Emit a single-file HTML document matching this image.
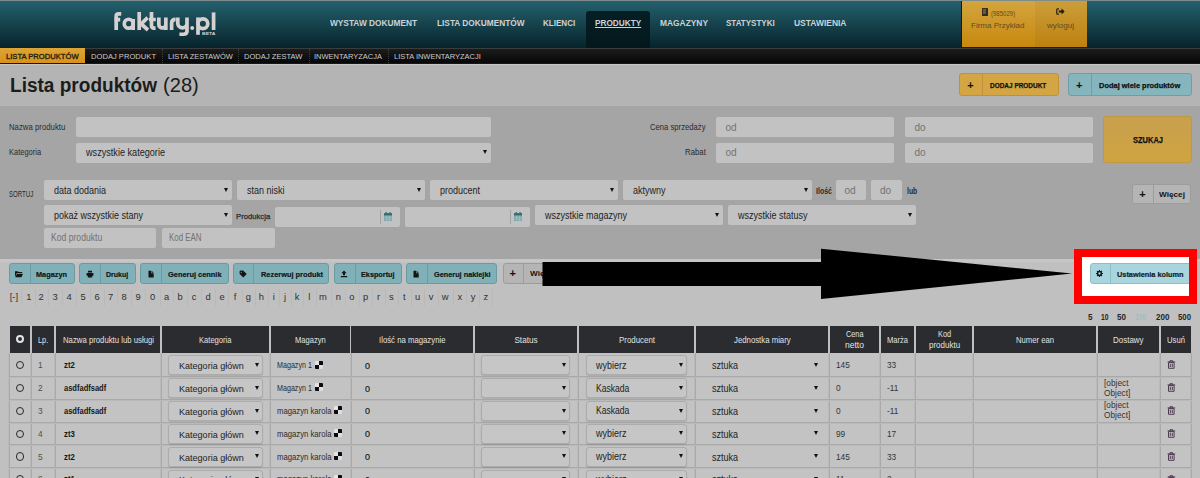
<!DOCTYPE html>
<html><head><meta charset="utf-8"><style>
*{margin:0;padding:0;box-sizing:border-box}
html,body{width:1200px;height:478px;overflow:hidden;background:#c0c0c0;font-family:"Liberation Sans",sans-serif}
body{position:relative}
.a{position:absolute}
.t{position:absolute;white-space:nowrap;transform-origin:0 0}
</style></head><body>
<div class="a" style="left:0px;top:0px;width:1200px;height:1px;background:#7f8c8e"></div>
<div class="a" style="left:0px;top:1px;width:1200px;height:47px;background:linear-gradient(#24616d,#07232b)"></div>
<svg class="a" style="left:0;top:0" width="230" height="48"><g fill="none" stroke="#d5d1d1" stroke-width="3.7"><path d="M116.2 30V16.2Q116.2 13.85 118.6 13.85H121.2M114.2 19.6H120.2"/><circle cx="128.7" cy="23.7" r="4.45"/><path d="M133.15 19V30"/><path d="M139.2 12V30M147.6 17.6L141.2 23.9L148 30"/><path d="M151.5 12V25.6Q151.5 28.2 154 28.2H155.6M149 19.5H155.8"/><path d="M158.85 17.4V24.4A3.5 3.5 0 0 0 165.85 24.4M165.85 17.4V30"/><path d="M171.6 30V23.3Q171.6 19.3 175.6 19.3"/><path d="M177.8 17.4V23.2A4.6 4.6 0 0 0 187 23.2M187 17.4V31Q187 34.25 183.6 34.25H179.4"/><path d="M198 17.4V34.8"/><circle cx="202.9" cy="23.7" r="4.9"/><path d="M213.6 12.4V30"/></g><circle cx="192.2" cy="28" r="2" fill="#d5d1d1"/></svg>
<div class="a" style="left:585.7px;top:11px;width:64.3px;height:36.5px;background:linear-gradient(#051f25,#03181d);border-radius:3px 3px 0 0"></div>
<div class="a" style="left:961px;top:1px;width:74px;height:46px;background:linear-gradient(#d3a53f,#c7880d);border-left:1px solid #1a1a10"></div>
<div class="a" style="left:1035px;top:1px;width:52px;height:46px;background:linear-gradient(#cb9e3b,#be810e)"></div>
<div class="a" style="left:0px;top:48px;width:1200px;height:16px;background:linear-gradient(#1d1d1d,#050505)"></div>
<div class="a" style="left:0px;top:47.6px;width:1200px;height:1px;background:#3a3d3e"></div>
<div class="a" style="left:0px;top:48px;width:85px;height:15px;background:linear-gradient(#dca436,#d8921a)"></div>
<div class="a" style="left:0px;top:63px;width:1200px;height:1px;background:#1a1712"></div>
<div class="a" style="left:161.5px;top:49px;width:1px;height:14px;border-left:1px dotted #3e3e3e"></div>
<div class="a" style="left:238.4px;top:49px;width:1px;height:14px;border-left:1px dotted #3e3e3e"></div>
<div class="a" style="left:309.3px;top:49px;width:1px;height:14px;border-left:1px dotted #3e3e3e"></div>
<div class="a" style="left:388px;top:49px;width:1px;height:14px;border-left:1px dotted #3e3e3e"></div>
<div class="a" style="left:0px;top:64px;width:1200px;height:42px;background:#b4b4b4"></div>
<div class="a" style="left:0px;top:64px;width:1200px;height:1px;background:#c6c6c6"></div>
<div class="a" style="left:959.4px;top:72.7px;width:99.4px;height:23.5px;background:#d3a543;border:1px solid #bf923a;border-radius:3px"></div>
<div class="a" style="left:982.3px;top:73.7px;width:1px;height:21.5px;background:#bf923a"></div>
<div class="a" style="left:1068px;top:72.7px;width:123.7px;height:23.5px;background:#85b5bd;border:1px solid #6f9ea6;border-radius:3px"></div>
<div class="a" style="left:1091.2px;top:73.7px;width:1px;height:21.5px;background:#6f9ea6"></div>
<div class="a" style="left:0px;top:106px;width:1200px;height:153px;background:#a5a5a5"></div>
<div class="a" style="left:76px;top:117px;width:415px;height:20px;background:#c2c2c2;border-radius:2px"></div>
<div class="a" style="left:76px;top:142.5px;width:415px;height:20px;background:#c2c2c2;border-radius:2px"></div>
<div class="a" style="left:482.90px;top:150.00px;width:0;height:0;border-left:2.30px solid transparent;border-right:2.30px solid transparent;border-top:4.20px solid #111"></div>
<div class="a" style="left:715.5px;top:117px;width:178px;height:20px;background:#c2c2c2;border-radius:2px"></div>
<div class="a" style="left:904.5px;top:117px;width:188px;height:20px;background:#c2c2c2;border-radius:2px"></div>
<div class="a" style="left:715.5px;top:142.5px;width:178px;height:20px;background:#c2c2c2;border-radius:2px"></div>
<div class="a" style="left:904.5px;top:142.5px;width:188px;height:20px;background:#c2c2c2;border-radius:2px"></div>
<div class="a" style="left:1102.7px;top:116px;width:89.5px;height:46.5px;background:linear-gradient(#c8a04e,#cfa440);border-radius:3px;border:1px solid #bf9840"></div>
<div class="a" style="left:43.8px;top:180px;width:188px;height:20px;background:#c2c2c2;border-radius:2px"></div>
<div class="a" style="left:223.70px;top:187.50px;width:0;height:0;border-left:2.30px solid transparent;border-right:2.30px solid transparent;border-top:4.20px solid #111"></div>
<div class="a" style="left:237px;top:180px;width:188px;height:20px;background:#c2c2c2;border-radius:2px"></div>
<div class="a" style="left:416.90px;top:187.50px;width:0;height:0;border-left:2.30px solid transparent;border-right:2.30px solid transparent;border-top:4.20px solid #111"></div>
<div class="a" style="left:430px;top:180px;width:188.3px;height:20px;background:#c2c2c2;border-radius:2px"></div>
<div class="a" style="left:610.20px;top:187.50px;width:0;height:0;border-left:2.30px solid transparent;border-right:2.30px solid transparent;border-top:4.20px solid #111"></div>
<div class="a" style="left:623.2px;top:180px;width:188.4px;height:20px;background:#c2c2c2;border-radius:2px"></div>
<div class="a" style="left:803.50px;top:187.50px;width:0;height:0;border-left:2.30px solid transparent;border-right:2.30px solid transparent;border-top:4.20px solid #111"></div>
<div class="a" style="left:836px;top:180px;width:30.3px;height:20px;background:#c2c2c2;border-radius:2px"></div>
<div class="a" style="left:871.4px;top:180px;width:30.6px;height:20px;background:#c2c2c2;border-radius:2px"></div>
<div class="a" style="left:1132px;top:183.6px;width:59.3px;height:20.8px;background:#b5b5b5;border:1px solid #9c9c9c;border-radius:3px"></div>
<div class="a" style="left:1152.8px;top:184.6px;width:1px;height:18.8px;background:#9c9c9c"></div>
<div class="a" style="left:43.8px;top:205.4px;width:188px;height:20px;background:#c2c2c2;border-radius:2px"></div>
<div class="a" style="left:223.70px;top:212.90px;width:0;height:0;border-left:2.30px solid transparent;border-right:2.30px solid transparent;border-top:4.20px solid #111"></div>
<div class="a" style="left:275px;top:206.75px;width:124.6px;height:20px;background:#c2c2c2;border-radius:2px"></div>
<div class="a" style="left:404.8px;top:206.75px;width:125px;height:20px;background:#c2c2c2;border-radius:2px"></div>
<div class="a" style="left:535px;top:205.4px;width:187.7px;height:20px;background:#c2c2c2;border-radius:2px"></div>
<div class="a" style="left:714.60px;top:212.90px;width:0;height:0;border-left:2.30px solid transparent;border-right:2.30px solid transparent;border-top:4.20px solid #111"></div>
<div class="a" style="left:728px;top:205.4px;width:188.4px;height:20px;background:#c2c2c2;border-radius:2px"></div>
<div class="a" style="left:908.30px;top:212.90px;width:0;height:0;border-left:2.30px solid transparent;border-right:2.30px solid transparent;border-top:4.20px solid #111"></div>
<div class="a" style="left:43.8px;top:228px;width:112.5px;height:20px;background:#c2c2c2;border-radius:2px"></div>
<div class="a" style="left:162px;top:228px;width:112.5px;height:20px;background:#c2c2c2;border-radius:2px"></div>
<div class="a" style="left:380.3px;top:209.5px;width:1px;height:14px;background:#a2a2a2"></div>
<svg class="a" style="left:383.8px;top:211.5px" width="8.4" height="9.4" viewBox="0 0 8.4 9.4"><rect x="0" y="1.2" width="8.4" height="8.2" rx=".8" fill="#7fa6aa"/><rect x="0" y="1.2" width="8.4" height="2.2" fill="#2f6c71"/><rect x="1.6" y="0" width="1.4" height="2" fill="#4b6f72"/><rect x="5.4" y="0" width="1.4" height="2" fill="#4b6f72"/><path d="M.6 5.2h7.2M.6 7.2h7.2M2.8 3.6v5.4M5.6 3.6v5.4" stroke="#a9c3c5" stroke-width=".7"/></svg>
<div class="a" style="left:510.1px;top:209.5px;width:1px;height:14px;background:#a2a2a2"></div>
<svg class="a" style="left:513.6px;top:211.5px" width="8.4" height="9.4" viewBox="0 0 8.4 9.4"><rect x="0" y="1.2" width="8.4" height="8.2" rx=".8" fill="#7fa6aa"/><rect x="0" y="1.2" width="8.4" height="2.2" fill="#2f6c71"/><rect x="1.6" y="0" width="1.4" height="2" fill="#4b6f72"/><rect x="5.4" y="0" width="1.4" height="2" fill="#4b6f72"/><path d="M.6 5.2h7.2M.6 7.2h7.2M2.8 3.6v5.4M5.6 3.6v5.4" stroke="#a9c3c5" stroke-width=".7"/></svg>
<div class="a" style="left:0px;top:259px;width:1200px;height:3px;background:#c6c6c6"></div>
<div class="a" style="left:9.1px;top:263px;width:65.60000000000001px;height:20.5px;background:#80b1b8;border:1px solid #6a9ba2;border-radius:3px"></div>
<div class="a" style="left:29.5px;top:264px;width:1px;height:18.5px;background:#6a9ba2"></div>
<div class="a" style="left:15.3px;top:269.8px;width:8px;height:8px;line-height:0"><svg width="8" height="8" style="display:block"><path d="M0 1.2h2.8l.8.9h3.6v1.2H1.6L0 7.2z" fill="#151515"/><path d="M1.9 3.9H8L6.4 7.2H.3z" fill="#151515"/></svg></div>
<div class="a" style="left:79.4px;top:263px;width:56.599999999999994px;height:20.5px;background:#80b1b8;border:1px solid #6a9ba2;border-radius:3px"></div>
<div class="a" style="left:99.6px;top:264px;width:1px;height:18.5px;background:#6a9ba2"></div>
<div class="a" style="left:85.5px;top:269.8px;width:8px;height:8px;line-height:0"><svg width="8" height="8" style="display:block"><path d="M2 .8h4v1.8H2zM.6 3h6.8v2.8H6.2V7.4H1.8V5.8H.6z" fill="#151515"/></svg></div>
<div class="a" style="left:140.4px;top:263px;width:88.19999999999999px;height:20.5px;background:#80b1b8;border:1px solid #6a9ba2;border-radius:3px"></div>
<div class="a" style="left:161.4px;top:264px;width:1px;height:18.5px;background:#6a9ba2"></div>
<div class="a" style="left:146.9px;top:269.8px;width:8px;height:8px;line-height:0"><svg width="8" height="8" style="display:block"><path d="M1.5 .7h2.6v2.6h2.6v4.2H1.5z" fill="#151515"/><path d="M4.6 .7l2.1 2.1H4.6z" fill="#151515"/></svg></div>
<div class="a" style="left:232.6px;top:263px;width:96.70000000000002px;height:20.5px;background:#80b1b8;border:1px solid #6a9ba2;border-radius:3px"></div>
<div class="a" style="left:253.4px;top:264px;width:1px;height:18.5px;background:#6a9ba2"></div>
<div class="a" style="left:239.0px;top:269.8px;width:8px;height:8px;line-height:0"><svg width="8" height="8" style="display:block"><path d="M.5 1.5L1.5.5h2.6l3.6 3.6-3.4 3.4L.7 3.9z" fill="#151515"/><circle cx="2.3" cy="2.3" r=".6" fill="#80b1b8"/></svg></div>
<div class="a" style="left:333.9px;top:263px;width:67.70000000000005px;height:20.5px;background:#80b1b8;border:1px solid #6a9ba2;border-radius:3px"></div>
<div class="a" style="left:354.5px;top:264px;width:1px;height:18.5px;background:#6a9ba2"></div>
<div class="a" style="left:340.2px;top:269.8px;width:8px;height:8px;line-height:0"><svg width="8" height="8" style="display:block"><path d="M4 .6L6.7 3.3H5v2H3v-2H1.3zM.8 5.9h6.4v1.3H.8z" fill="#151515"/></svg></div>
<div class="a" style="left:405.9px;top:263px;width:91.30000000000001px;height:20.5px;background:#80b1b8;border:1px solid #6a9ba2;border-radius:3px"></div>
<div class="a" style="left:426.8px;top:264px;width:1px;height:18.5px;background:#6a9ba2"></div>
<div class="a" style="left:412.35px;top:269.8px;width:8px;height:8px;line-height:0"><svg width="8" height="8" style="display:block"><path d="M1.5 .7h2.6v2.6h2.6v4.2H1.5z" fill="#151515"/><path d="M4.6 .7l2.1 2.1H4.6z" fill="#151515"/></svg></div>
<div class="a" style="left:502.6px;top:263px;width:60px;height:20.5px;background:#b5b5b5;border:1px solid #9c9c9c;border-radius:3px"></div>
<div class="a" style="left:522.9px;top:264px;width:1px;height:18.5px;background:#9c9c9c"></div>
<div class="a" style="left:21px;top:289px;width:1px;height:17px;background:#b9b9b9"></div>
<div class="a" style="left:35px;top:289px;width:1px;height:17px;background:#b9b9b9"></div>
<div class="a" style="left:48px;top:289px;width:1px;height:17px;background:#b9b9b9"></div>
<div class="a" style="left:62px;top:289px;width:1px;height:17px;background:#b9b9b9"></div>
<div class="a" style="left:76px;top:289px;width:1px;height:17px;background:#b9b9b9"></div>
<div class="a" style="left:90px;top:289px;width:1px;height:17px;background:#b9b9b9"></div>
<div class="a" style="left:104px;top:289px;width:1px;height:17px;background:#b9b9b9"></div>
<div class="a" style="left:117px;top:289px;width:1px;height:17px;background:#b9b9b9"></div>
<div class="a" style="left:131px;top:289px;width:1px;height:17px;background:#b9b9b9"></div>
<div class="a" style="left:145px;top:289px;width:1px;height:17px;background:#b9b9b9"></div>
<div class="a" style="left:160px;top:289px;width:1px;height:17px;background:#b9b9b9"></div>
<div class="a" style="left:173px;top:289px;width:1px;height:17px;background:#b9b9b9"></div>
<div class="a" style="left:187px;top:289px;width:1px;height:17px;background:#b9b9b9"></div>
<div class="a" style="left:201px;top:289px;width:1px;height:17px;background:#b9b9b9"></div>
<div class="a" style="left:215px;top:289px;width:1px;height:17px;background:#b9b9b9"></div>
<div class="a" style="left:228px;top:289px;width:1px;height:17px;background:#b9b9b9"></div>
<div class="a" style="left:242px;top:289px;width:1px;height:17px;background:#b9b9b9"></div>
<div class="a" style="left:255px;top:289px;width:1px;height:17px;background:#b9b9b9"></div>
<div class="a" style="left:268px;top:289px;width:1px;height:17px;background:#b9b9b9"></div>
<div class="a" style="left:279px;top:289px;width:1px;height:17px;background:#b9b9b9"></div>
<div class="a" style="left:291px;top:289px;width:1px;height:17px;background:#b9b9b9"></div>
<div class="a" style="left:303px;top:289px;width:1px;height:17px;background:#b9b9b9"></div>
<div class="a" style="left:316px;top:289px;width:1px;height:17px;background:#b9b9b9"></div>
<div class="a" style="left:331px;top:289px;width:1px;height:17px;background:#b9b9b9"></div>
<div class="a" style="left:345px;top:289px;width:1px;height:17px;background:#b9b9b9"></div>
<div class="a" style="left:359px;top:289px;width:1px;height:17px;background:#b9b9b9"></div>
<div class="a" style="left:372px;top:289px;width:1px;height:17px;background:#b9b9b9"></div>
<div class="a" style="left:385px;top:289px;width:1px;height:17px;background:#b9b9b9"></div>
<div class="a" style="left:398px;top:289px;width:1px;height:17px;background:#b9b9b9"></div>
<div class="a" style="left:411px;top:289px;width:1px;height:17px;background:#b9b9b9"></div>
<div class="a" style="left:424px;top:289px;width:1px;height:17px;background:#b9b9b9"></div>
<div class="a" style="left:438px;top:289px;width:1px;height:17px;background:#b9b9b9"></div>
<div class="a" style="left:453px;top:289px;width:1px;height:17px;background:#b9b9b9"></div>
<div class="a" style="left:466px;top:289px;width:1px;height:17px;background:#b9b9b9"></div>
<div class="a" style="left:479px;top:289px;width:1px;height:17px;background:#b9b9b9"></div>
<div class="a" style="left:492px;top:289px;width:1px;height:17px;background:#b9b9b9"></div>
<div class="a" style="left:9.5px;top:353px;width:1182px;height:125px;background:#c3c3c3"></div>
<div class="a" style="left:9.6px;top:326px;width:20.200000000000003px;height:27px;background:#2b2c30"></div>
<div class="a" style="left:32.1px;top:326px;width:21.799999999999997px;height:27px;background:#2b2c30"></div>
<div class="a" style="left:56.1px;top:326px;width:103.80000000000001px;height:27px;background:#2b2c30"></div>
<div class="a" style="left:162px;top:326px;width:107.19999999999999px;height:27px;background:#2b2c30"></div>
<div class="a" style="left:271.1px;top:326px;width:78.69999999999999px;height:27px;background:#2b2c30"></div>
<div class="a" style="left:351.4px;top:326px;width:121.60000000000002px;height:27px;background:#2b2c30"></div>
<div class="a" style="left:475.4px;top:326px;width:101.20000000000005px;height:27px;background:#2b2c30"></div>
<div class="a" style="left:579.1px;top:326px;width:114.79999999999995px;height:27px;background:#2b2c30"></div>
<div class="a" style="left:696px;top:326px;width:131.70000000000005px;height:27px;background:#2b2c30"></div>
<div class="a" style="left:829.8px;top:326px;width:49.10000000000002px;height:27px;background:#2b2c30"></div>
<div class="a" style="left:881px;top:326px;width:33px;height:27px;background:#2b2c30"></div>
<div class="a" style="left:916.3px;top:326px;width:55.700000000000045px;height:27px;background:#2b2c30"></div>
<div class="a" style="left:974.1px;top:326px;width:121.60000000000002px;height:27px;background:#2b2c30"></div>
<div class="a" style="left:1097.7px;top:326px;width:61.299999999999955px;height:27px;background:#2b2c30"></div>
<div class="a" style="left:1161px;top:326px;width:30.200000000000045px;height:27px;background:#2b2c30"></div>
<div class="a" style="left:8px;top:353px;width:2px;height:125px;background:linear-gradient(90deg,#bababa 50%,#a9a9a9 50%)"></div>
<div class="a" style="left:30px;top:353px;width:2px;height:125px;background:linear-gradient(90deg,#bababa 50%,#a9a9a9 50%)"></div>
<div class="a" style="left:54px;top:353px;width:2px;height:125px;background:linear-gradient(90deg,#bababa 50%,#a9a9a9 50%)"></div>
<div class="a" style="left:160px;top:353px;width:2px;height:125px;background:linear-gradient(90deg,#bababa 50%,#a9a9a9 50%)"></div>
<div class="a" style="left:269px;top:353px;width:2px;height:125px;background:linear-gradient(90deg,#bababa 50%,#a9a9a9 50%)"></div>
<div class="a" style="left:350px;top:353px;width:2px;height:125px;background:linear-gradient(90deg,#bababa 50%,#a9a9a9 50%)"></div>
<div class="a" style="left:473px;top:353px;width:2px;height:125px;background:linear-gradient(90deg,#bababa 50%,#a9a9a9 50%)"></div>
<div class="a" style="left:577px;top:353px;width:2px;height:125px;background:linear-gradient(90deg,#bababa 50%,#a9a9a9 50%)"></div>
<div class="a" style="left:694px;top:353px;width:2px;height:125px;background:linear-gradient(90deg,#bababa 50%,#a9a9a9 50%)"></div>
<div class="a" style="left:828px;top:353px;width:2px;height:125px;background:linear-gradient(90deg,#bababa 50%,#a9a9a9 50%)"></div>
<div class="a" style="left:879px;top:353px;width:2px;height:125px;background:linear-gradient(90deg,#bababa 50%,#a9a9a9 50%)"></div>
<div class="a" style="left:914px;top:353px;width:2px;height:125px;background:linear-gradient(90deg,#bababa 50%,#a9a9a9 50%)"></div>
<div class="a" style="left:972px;top:353px;width:2px;height:125px;background:linear-gradient(90deg,#bababa 50%,#a9a9a9 50%)"></div>
<div class="a" style="left:1096px;top:353px;width:2px;height:125px;background:linear-gradient(90deg,#bababa 50%,#a9a9a9 50%)"></div>
<div class="a" style="left:1159px;top:353px;width:2px;height:125px;background:linear-gradient(90deg,#bababa 50%,#a9a9a9 50%)"></div>
<div class="a" style="left:1190px;top:353px;width:2px;height:125px;background:linear-gradient(90deg,#bababa 50%,#a9a9a9 50%)"></div>
<div class="a" style="left:9px;top:376px;width:1183px;height:2px;background:linear-gradient(#a9a9a9 50%,#bababa 50%)"></div>
<div class="a" style="left:9px;top:399px;width:1183px;height:2px;background:linear-gradient(#a9a9a9 50%,#bababa 50%)"></div>
<div class="a" style="left:9px;top:422px;width:1183px;height:2px;background:linear-gradient(#a9a9a9 50%,#bababa 50%)"></div>
<div class="a" style="left:9px;top:444px;width:1183px;height:2px;background:linear-gradient(#a9a9a9 50%,#bababa 50%)"></div>
<div class="a" style="left:9px;top:467px;width:1183px;height:2px;background:linear-gradient(#a9a9a9 50%,#bababa 50%)"></div>
<div class="a" style="left:15.6px;top:335.1px;width:8.4px;height:8.4px;border:2px solid #e4e4e4;border-radius:50%"></div>
<div class="a" style="left:15.8px;top:361.0px;width:8.2px;height:8.2px;border:1.7px solid #2a2a2a;border-radius:50%"></div>
<div class="a" style="left:168.4px;top:355.4px;width:94.70000000000002px;height:20px;background:#c6c6c6;border:1px solid #acacac;border-radius:3px;box-shadow:0 1px 1px rgba(0,0,0,0.12)"></div>
<div class="a" style="left:254.90px;top:362.90px;width:0;height:0;border-left:2.30px solid transparent;border-right:2.30px solid transparent;border-top:4.20px solid #111"></div>
<div class="a" style="left:314.6px;top:360.59999999999997px;width:8px;height:8px;background:linear-gradient(90deg,#e8e2e2 50%,#0a0a14 50%) top/8px 4px no-repeat,linear-gradient(90deg,#0a0a14 50%,#dedede 50%) bottom/8px 4px no-repeat;border-radius:1px"></div>
<div class="a" style="left:480.8px;top:355.4px;width:89.40000000000003px;height:20px;background:#c6c6c6;border:1px solid #acacac;border-radius:3px;box-shadow:0 1px 1px rgba(0,0,0,0.12)"></div>
<div class="a" style="left:562.00px;top:362.90px;width:0;height:0;border-left:2.30px solid transparent;border-right:2.30px solid transparent;border-top:4.20px solid #111"></div>
<div class="a" style="left:585.6px;top:355.4px;width:101.79999999999995px;height:20px;background:#c6c6c6;border:1px solid #acacac;border-radius:3px;box-shadow:0 1px 1px rgba(0,0,0,0.12)"></div>
<div class="a" style="left:679.20px;top:362.90px;width:0;height:0;border-left:2.30px solid transparent;border-right:2.30px solid transparent;border-top:4.20px solid #111"></div>
<div class="a" style="left:813.70px;top:362.90px;width:0;height:0;border-left:2.30px solid transparent;border-right:2.30px solid transparent;border-top:4.20px solid #111"></div>
<svg class="a" style="left:1166.5px;top:360.4px" width="9" height="9" viewBox="0 0 9 9"><path d="M.6 1.9h7.6M3 1.9V.7h2.6v1.2M1.5 2.6h5.6v5.7H1.5zM3.3 3.8v3.3M5.3 3.8v3.3" fill="none" stroke="#4e3c52" stroke-width="1"/></svg>
<div class="a" style="left:15.8px;top:383.8px;width:8.2px;height:8.2px;border:1.7px solid #2a2a2a;border-radius:50%"></div>
<div class="a" style="left:168.4px;top:378.2px;width:94.70000000000002px;height:20px;background:#c6c6c6;border:1px solid #acacac;border-radius:3px;box-shadow:0 1px 1px rgba(0,0,0,0.12)"></div>
<div class="a" style="left:254.90px;top:385.70px;width:0;height:0;border-left:2.30px solid transparent;border-right:2.30px solid transparent;border-top:4.20px solid #111"></div>
<div class="a" style="left:314.6px;top:383.4px;width:8px;height:8px;background:linear-gradient(90deg,#e8e2e2 50%,#0a0a14 50%) top/8px 4px no-repeat,linear-gradient(90deg,#0a0a14 50%,#dedede 50%) bottom/8px 4px no-repeat;border-radius:1px"></div>
<div class="a" style="left:480.8px;top:378.2px;width:89.40000000000003px;height:20px;background:#c6c6c6;border:1px solid #acacac;border-radius:3px;box-shadow:0 1px 1px rgba(0,0,0,0.12)"></div>
<div class="a" style="left:562.00px;top:385.70px;width:0;height:0;border-left:2.30px solid transparent;border-right:2.30px solid transparent;border-top:4.20px solid #111"></div>
<div class="a" style="left:585.6px;top:378.2px;width:101.79999999999995px;height:20px;background:#c6c6c6;border:1px solid #acacac;border-radius:3px;box-shadow:0 1px 1px rgba(0,0,0,0.12)"></div>
<div class="a" style="left:679.20px;top:385.70px;width:0;height:0;border-left:2.30px solid transparent;border-right:2.30px solid transparent;border-top:4.20px solid #111"></div>
<div class="a" style="left:813.70px;top:385.70px;width:0;height:0;border-left:2.30px solid transparent;border-right:2.30px solid transparent;border-top:4.20px solid #111"></div>
<svg class="a" style="left:1166.5px;top:383.2px" width="9" height="9" viewBox="0 0 9 9"><path d="M.6 1.9h7.6M3 1.9V.7h2.6v1.2M1.5 2.6h5.6v5.7H1.5zM3.3 3.8v3.3M5.3 3.8v3.3" fill="none" stroke="#4e3c52" stroke-width="1"/></svg>
<div class="a" style="left:15.8px;top:406.65000000000003px;width:8.2px;height:8.2px;border:1.7px solid #2a2a2a;border-radius:50%"></div>
<div class="a" style="left:168.4px;top:401.05px;width:94.70000000000002px;height:20px;background:#c6c6c6;border:1px solid #acacac;border-radius:3px;box-shadow:0 1px 1px rgba(0,0,0,0.12)"></div>
<div class="a" style="left:254.90px;top:408.55px;width:0;height:0;border-left:2.30px solid transparent;border-right:2.30px solid transparent;border-top:4.20px solid #111"></div>
<div class="a" style="left:334.2px;top:406.25px;width:8px;height:8px;background:linear-gradient(90deg,#e8e2e2 50%,#0a0a14 50%) top/8px 4px no-repeat,linear-gradient(90deg,#0a0a14 50%,#dedede 50%) bottom/8px 4px no-repeat;border-radius:1px"></div>
<div class="a" style="left:480.8px;top:401.05px;width:89.40000000000003px;height:20px;background:#c6c6c6;border:1px solid #acacac;border-radius:3px;box-shadow:0 1px 1px rgba(0,0,0,0.12)"></div>
<div class="a" style="left:562.00px;top:408.55px;width:0;height:0;border-left:2.30px solid transparent;border-right:2.30px solid transparent;border-top:4.20px solid #111"></div>
<div class="a" style="left:585.6px;top:401.05px;width:101.79999999999995px;height:20px;background:#c6c6c6;border:1px solid #acacac;border-radius:3px;box-shadow:0 1px 1px rgba(0,0,0,0.12)"></div>
<div class="a" style="left:679.20px;top:408.55px;width:0;height:0;border-left:2.30px solid transparent;border-right:2.30px solid transparent;border-top:4.20px solid #111"></div>
<div class="a" style="left:813.70px;top:408.55px;width:0;height:0;border-left:2.30px solid transparent;border-right:2.30px solid transparent;border-top:4.20px solid #111"></div>
<svg class="a" style="left:1166.5px;top:406.05px" width="9" height="9" viewBox="0 0 9 9"><path d="M.6 1.9h7.6M3 1.9V.7h2.6v1.2M1.5 2.6h5.6v5.7H1.5zM3.3 3.8v3.3M5.3 3.8v3.3" fill="none" stroke="#4e3c52" stroke-width="1"/></svg>
<div class="a" style="left:15.8px;top:429.5px;width:8.2px;height:8.2px;border:1.7px solid #2a2a2a;border-radius:50%"></div>
<div class="a" style="left:168.4px;top:423.9px;width:94.70000000000002px;height:20px;background:#c6c6c6;border:1px solid #acacac;border-radius:3px;box-shadow:0 1px 1px rgba(0,0,0,0.12)"></div>
<div class="a" style="left:254.90px;top:431.40px;width:0;height:0;border-left:2.30px solid transparent;border-right:2.30px solid transparent;border-top:4.20px solid #111"></div>
<div class="a" style="left:334.2px;top:429.09999999999997px;width:8px;height:8px;background:linear-gradient(90deg,#e8e2e2 50%,#0a0a14 50%) top/8px 4px no-repeat,linear-gradient(90deg,#0a0a14 50%,#dedede 50%) bottom/8px 4px no-repeat;border-radius:1px"></div>
<div class="a" style="left:480.8px;top:423.9px;width:89.40000000000003px;height:20px;background:#c6c6c6;border:1px solid #acacac;border-radius:3px;box-shadow:0 1px 1px rgba(0,0,0,0.12)"></div>
<div class="a" style="left:562.00px;top:431.40px;width:0;height:0;border-left:2.30px solid transparent;border-right:2.30px solid transparent;border-top:4.20px solid #111"></div>
<div class="a" style="left:585.6px;top:423.9px;width:101.79999999999995px;height:20px;background:#c6c6c6;border:1px solid #acacac;border-radius:3px;box-shadow:0 1px 1px rgba(0,0,0,0.12)"></div>
<div class="a" style="left:679.20px;top:431.40px;width:0;height:0;border-left:2.30px solid transparent;border-right:2.30px solid transparent;border-top:4.20px solid #111"></div>
<div class="a" style="left:813.70px;top:431.40px;width:0;height:0;border-left:2.30px solid transparent;border-right:2.30px solid transparent;border-top:4.20px solid #111"></div>
<svg class="a" style="left:1166.5px;top:428.9px" width="9" height="9" viewBox="0 0 9 9"><path d="M.6 1.9h7.6M3 1.9V.7h2.6v1.2M1.5 2.6h5.6v5.7H1.5zM3.3 3.8v3.3M5.3 3.8v3.3" fill="none" stroke="#4e3c52" stroke-width="1"/></svg>
<div class="a" style="left:15.8px;top:452.35px;width:8.2px;height:8.2px;border:1.7px solid #2a2a2a;border-radius:50%"></div>
<div class="a" style="left:168.4px;top:446.75px;width:94.70000000000002px;height:20px;background:#c6c6c6;border:1px solid #acacac;border-radius:3px;box-shadow:0 1px 1px rgba(0,0,0,0.12)"></div>
<div class="a" style="left:254.90px;top:454.25px;width:0;height:0;border-left:2.30px solid transparent;border-right:2.30px solid transparent;border-top:4.20px solid #111"></div>
<div class="a" style="left:334.2px;top:451.95px;width:8px;height:8px;background:linear-gradient(90deg,#e8e2e2 50%,#0a0a14 50%) top/8px 4px no-repeat,linear-gradient(90deg,#0a0a14 50%,#dedede 50%) bottom/8px 4px no-repeat;border-radius:1px"></div>
<div class="a" style="left:480.8px;top:446.75px;width:89.40000000000003px;height:20px;background:#c6c6c6;border:1px solid #acacac;border-radius:3px;box-shadow:0 1px 1px rgba(0,0,0,0.12)"></div>
<div class="a" style="left:562.00px;top:454.25px;width:0;height:0;border-left:2.30px solid transparent;border-right:2.30px solid transparent;border-top:4.20px solid #111"></div>
<div class="a" style="left:585.6px;top:446.75px;width:101.79999999999995px;height:20px;background:#c6c6c6;border:1px solid #acacac;border-radius:3px;box-shadow:0 1px 1px rgba(0,0,0,0.12)"></div>
<div class="a" style="left:679.20px;top:454.25px;width:0;height:0;border-left:2.30px solid transparent;border-right:2.30px solid transparent;border-top:4.20px solid #111"></div>
<div class="a" style="left:813.70px;top:454.25px;width:0;height:0;border-left:2.30px solid transparent;border-right:2.30px solid transparent;border-top:4.20px solid #111"></div>
<svg class="a" style="left:1166.5px;top:451.75px" width="9" height="9" viewBox="0 0 9 9"><path d="M.6 1.9h7.6M3 1.9V.7h2.6v1.2M1.5 2.6h5.6v5.7H1.5zM3.3 3.8v3.3M5.3 3.8v3.3" fill="none" stroke="#4e3c52" stroke-width="1"/></svg>
<div class="a" style="left:15.8px;top:475.2px;width:8.2px;height:8.2px;border:1.7px solid #2a2a2a;border-radius:50%"></div>
<div class="a" style="left:168.4px;top:469.59999999999997px;width:94.70000000000002px;height:20px;background:#c6c6c6;border:1px solid #acacac;border-radius:3px;box-shadow:0 1px 1px rgba(0,0,0,0.12)"></div>
<div class="a" style="left:254.90px;top:477.10px;width:0;height:0;border-left:2.30px solid transparent;border-right:2.30px solid transparent;border-top:4.20px solid #111"></div>
<div class="a" style="left:334.2px;top:474.79999999999995px;width:8px;height:8px;background:linear-gradient(90deg,#e8e2e2 50%,#0a0a14 50%) top/8px 4px no-repeat,linear-gradient(90deg,#0a0a14 50%,#dedede 50%) bottom/8px 4px no-repeat;border-radius:1px"></div>
<div class="a" style="left:480.8px;top:469.59999999999997px;width:89.40000000000003px;height:20px;background:#c6c6c6;border:1px solid #acacac;border-radius:3px;box-shadow:0 1px 1px rgba(0,0,0,0.12)"></div>
<div class="a" style="left:562.00px;top:477.10px;width:0;height:0;border-left:2.30px solid transparent;border-right:2.30px solid transparent;border-top:4.20px solid #111"></div>
<div class="a" style="left:585.6px;top:469.59999999999997px;width:101.79999999999995px;height:20px;background:#c6c6c6;border:1px solid #acacac;border-radius:3px;box-shadow:0 1px 1px rgba(0,0,0,0.12)"></div>
<div class="a" style="left:679.20px;top:477.10px;width:0;height:0;border-left:2.30px solid transparent;border-right:2.30px solid transparent;border-top:4.20px solid #111"></div>
<div class="a" style="left:813.70px;top:477.10px;width:0;height:0;border-left:2.30px solid transparent;border-right:2.30px solid transparent;border-top:4.20px solid #111"></div>
<svg class="a" style="left:1166.5px;top:474.59999999999997px" width="9" height="9" viewBox="0 0 9 9"><path d="M.6 1.9h7.6M3 1.9V.7h2.6v1.2M1.5 2.6h5.6v5.7H1.5zM3.3 3.8v3.3M5.3 3.8v3.3" fill="none" stroke="#4e3c52" stroke-width="1"/></svg>
<div class="a" style="left:981.5px;top:7.5px;width:6.5px;height:8.5px;background:#2c2a2a;border:1px solid #3a3020"></div>
<div class="a" style="left:983.3px;top:9.3px;width:3px;height:5px;background:#6a5a3a"></div>
<svg class="a" style="left:1055.5px;top:8px" width="9" height="7" viewBox="0 0 9 7"><path d="M3 .8H1.6Q.7 .8 .7 1.7v3.6q0 .9.9.9H3" fill="none" stroke="#2a2418" stroke-width="1.2"/><path d="M2.8 2.6h2.8V.6L8.6 3.5 5.6 6.4V4.4H2.8z" fill="#1f1a10"/></svg>
<svg class="a" style="left:1096.2px;top:269.8px;z-index:5" width="7" height="7" viewBox="0 0 7 7"><circle cx="3.5" cy="3.5" r="1.9" fill="none" stroke="#1a1a1a" stroke-width="1.5"/><path d="M3.5 0v1.3M3.5 5.7V7M0 3.5h1.3M5.7 3.5H7M1 1l.9.9M5.1 5.1l.9.9M1 6l.9-.9M5.1 1.9L6 1" stroke="#1a1a1a" stroke-width="1.1"/></svg>
<div class="t" id="t0" style="left:201.9px;top:32.21px;font-size:4.2px;line-height:4.69px;color:#d5d1d1;font-weight:bold;transform:scaleX(1.208);">BETA</div>
<div class="t" id="t1" style="left:330px;top:18.00px;font-size:9.7px;line-height:10.83px;color:#cdd2d3;font-weight:bold;transform:scaleX(0.857);">WYSTAW DOKUMENT</div>
<div class="t" id="t2" style="left:436.8px;top:18.00px;font-size:9.7px;line-height:10.83px;color:#cdd2d3;font-weight:bold;transform:scaleX(0.856);">LISTA DOKUMENTÓW</div>
<div class="t" id="t3" style="left:543.3px;top:18.00px;font-size:9.7px;line-height:10.83px;color:#cdd2d3;font-weight:bold;transform:scaleX(0.831);">KLIENCI</div>
<div class="t" id="t4" style="left:594.6px;top:18.00px;font-size:9.7px;line-height:10.83px;color:#cdd2d3;font-weight:bold;transform:scaleX(0.850);text-decoration:underline;">PRODUKTY</div>
<div class="t" id="t5" style="left:659.5px;top:18.00px;font-size:9.7px;line-height:10.83px;color:#cdd2d3;font-weight:bold;transform:scaleX(0.866);">MAGAZYNY</div>
<div class="t" id="t6" style="left:726.3px;top:18.00px;font-size:9.7px;line-height:10.83px;color:#cdd2d3;font-weight:bold;transform:scaleX(0.828);">STATYSTYKI</div>
<div class="t" id="t7" style="left:793.8px;top:18.00px;font-size:9.7px;line-height:10.83px;color:#cdd2d3;font-weight:bold;transform:scaleX(0.873);">USTAWIENIA</div>
<div class="t" id="t8" style="left:6px;top:52.70px;font-size:6.8px;line-height:7.60px;color:#231d0e;transform:scaleX(1.120);-webkit-text-stroke:0.3px #231d0e;">LISTA PRODUKTÓW</div>
<div class="t" id="t9" style="left:90.8px;top:52.70px;font-size:6.8px;line-height:7.60px;color:#cbcbcb;transform:scaleX(1.118);">DODAJ PRODUKT</div>
<div class="t" id="t10" style="left:167.5px;top:52.70px;font-size:6.8px;line-height:7.60px;color:#cbcbcb;transform:scaleX(1.095);">LISTA ZESTAWÓW</div>
<div class="t" id="t11" style="left:243.8px;top:52.70px;font-size:6.8px;line-height:7.60px;color:#cbcbcb;transform:scaleX(1.114);">DODAJ ZESTAW</div>
<div class="t" id="t12" style="left:313.8px;top:52.70px;font-size:6.8px;line-height:7.60px;color:#cbcbcb;transform:scaleX(1.101);">INWENTARYZACJA</div>
<div class="t" id="t13" style="left:394px;top:52.70px;font-size:6.8px;line-height:7.60px;color:#cbcbcb;transform:scaleX(1.100);">LISTA INWENTARYZACJI</div>
<div class="t" id="t14" style="left:9.6px;top:74.40px;font-size:20px;line-height:22.34px;color:#1c1c1c;font-weight:bold;transform:scaleX(0.952);">Lista produktów</div>
<div class="t" id="t15" style="left:162.8px;top:74.40px;font-size:20px;line-height:22.34px;color:#1c1c1c;transform:scaleX(1.006);">(28)</div>
<div class="t" id="t16" style="left:967.18px;top:78.50px;font-size:11px;line-height:12.29px;color:#111;font-weight:bold;">+</div>
<div class="t" id="t17" style="left:990.2px;top:82.31px;font-size:7.4px;line-height:8.27px;color:#111;font-weight:bold;transform:scaleX(0.873);-webkit-text-stroke:0.25px #111;">DODAJ PRODUKT</div>
<div class="t" id="t18" style="left:1075.98px;top:78.50px;font-size:11px;line-height:12.29px;color:#111;font-weight:bold;">+</div>
<div class="t" id="t19" style="left:1099px;top:82.31px;font-size:7.4px;line-height:8.27px;color:#111;font-weight:bold;transform:scaleX(1.009);-webkit-text-stroke:0.25px #111;">Dodaj wiele produktów</div>
<div class="t" id="t20" style="left:8.7px;top:122.71px;font-size:8.2px;line-height:9.16px;color:#2a2a2a;transform:scaleX(0.951);">Nazwa produktu</div>
<div class="t" id="t21" style="left:8.7px;top:148.00px;font-size:8.2px;line-height:9.16px;color:#2a2a2a;transform:scaleX(0.916);">Kategoria</div>
<div class="t" id="t22" style="left:650px;top:122.71px;font-size:8.2px;line-height:9.16px;color:#2a2a2a;transform:scaleX(0.938);">Cena sprzedaży</div>
<div class="t" id="t23" style="left:684.5px;top:148.00px;font-size:8.2px;line-height:9.16px;color:#2a2a2a;transform:scaleX(0.952);">Rabat</div>
<div class="t" id="t24" style="left:85.8px;top:147.30px;font-size:10px;line-height:11.17px;color:#222;transform:scaleX(0.911);">wszystkie kategorie</div>
<div class="t" id="t25" style="left:725.5px;top:121.80px;font-size:10px;line-height:11.17px;color:#727272;">od</div>
<div class="t" id="t26" style="left:914.5px;top:121.80px;font-size:10px;line-height:11.17px;color:#727272;">do</div>
<div class="t" id="t27" style="left:725.5px;top:147.30px;font-size:10px;line-height:11.17px;color:#727272;">od</div>
<div class="t" id="t28" style="left:914.5px;top:147.30px;font-size:10px;line-height:11.17px;color:#727272;">do</div>
<div class="t" id="t29" style="left:1132.5px;top:135.80px;font-size:8.6px;line-height:9.61px;color:#111;font-weight:bold;transform:scaleX(0.872);-webkit-text-stroke:0.25px #111;">SZUKAJ</div>
<div class="t" id="t30" style="left:8.9px;top:189.71px;font-size:8.5px;line-height:9.49px;color:#2a2a2a;transform:scaleX(0.718);">SORTUJ</div>
<div class="t" id="t31" style="left:53.8px;top:184.80px;font-size:10px;line-height:11.17px;color:#222;transform:scaleX(0.899);">data dodania</div>
<div class="t" id="t32" style="left:247px;top:184.80px;font-size:10px;line-height:11.17px;color:#222;transform:scaleX(0.900);">stan niski</div>
<div class="t" id="t33" style="left:440px;top:184.80px;font-size:10px;line-height:11.17px;color:#222;transform:scaleX(0.900);">producent</div>
<div class="t" id="t34" style="left:633.2px;top:184.80px;font-size:10px;line-height:11.17px;color:#222;transform:scaleX(0.900);">aktywny</div>
<div class="t" id="t35" style="left:816px;top:186.71px;font-size:8.2px;line-height:9.16px;color:#2a2a2a;font-weight:bold;transform:scaleX(0.857);">Ilość</div>
<div class="t" id="t36" style="left:844.4px;top:184.80px;font-size:10px;line-height:11.17px;color:#727272;">od</div>
<div class="t" id="t37" style="left:880.0px;top:184.80px;font-size:10px;line-height:11.17px;color:#727272;">do</div>
<div class="t" id="t38" style="left:906.7px;top:186.71px;font-size:8.2px;line-height:9.16px;color:#2a2a2a;font-weight:bold;transform:scaleX(0.839);">lub</div>
<div class="t" id="t39" style="left:1139.18px;top:188.21px;font-size:11px;line-height:12.29px;color:#111;font-weight:bold;">+</div>
<div class="t" id="t40" style="left:1159px;top:191.01px;font-size:8px;line-height:8.94px;color:#141414;font-weight:bold;transform:scaleX(1.028);">Więcej</div>
<div class="t" id="t41" style="left:53.8px;top:210.21px;font-size:10px;line-height:11.17px;color:#222;transform:scaleX(0.900);">pokaż wszystkie stany</div>
<div class="t" id="t42" style="left:236px;top:212.72px;font-size:7.8px;line-height:8.71px;color:#2a2a2a;transform:scaleX(0.986);-webkit-text-stroke:0.25px #2a2a2a;">Produkcja</div>
<div class="t" id="t43" style="left:545px;top:210.21px;font-size:10px;line-height:11.17px;color:#222;transform:scaleX(0.900);">wszystkie magazyny</div>
<div class="t" id="t44" style="left:738px;top:210.21px;font-size:10px;line-height:11.17px;color:#222;transform:scaleX(0.900);">wszystkie statusy</div>
<div class="t" id="t45" style="left:51.199999999999996px;top:231.61px;font-size:10.2px;line-height:11.39px;color:#727272;transform:scaleX(0.845);">Kod produktu</div>
<div class="t" id="t46" style="left:168.8px;top:231.61px;font-size:10.2px;line-height:11.39px;color:#727272;transform:scaleX(0.776);">Kod EAN</div>
<div class="t" id="t47" style="left:36.2px;top:270.71px;font-size:8px;line-height:8.94px;color:#111618;font-weight:bold;transform:scaleX(0.917);-webkit-text-stroke:0.2px #111618;">Magazyn</div>
<div class="t" id="t48" style="left:106.2px;top:270.71px;font-size:8px;line-height:8.94px;color:#111618;font-weight:bold;transform:scaleX(0.876);-webkit-text-stroke:0.2px #111618;">Drukuj</div>
<div class="t" id="t49" style="left:168px;top:270.71px;font-size:8px;line-height:8.94px;color:#111618;font-weight:bold;transform:scaleX(0.926);-webkit-text-stroke:0.2px #111618;">Generuj cennik</div>
<div class="t" id="t50" style="left:260.5px;top:270.71px;font-size:8px;line-height:8.94px;color:#111618;font-weight:bold;transform:scaleX(0.924);-webkit-text-stroke:0.2px #111618;">Rezerwuj produkt</div>
<div class="t" id="t51" style="left:361px;top:270.71px;font-size:8px;line-height:8.94px;color:#111618;font-weight:bold;transform:scaleX(0.908);-webkit-text-stroke:0.2px #111618;">Eksportuj</div>
<div class="t" id="t52" style="left:433.5px;top:270.71px;font-size:8px;line-height:8.94px;color:#111618;font-weight:bold;transform:scaleX(0.914);-webkit-text-stroke:0.2px #111618;">Generuj naklejki</div>
<div class="t" id="t53" style="left:509.53px;top:267.44px;font-size:11px;line-height:12.29px;color:#111;font-weight:bold;">+</div>
<div class="t" id="t54" style="left:529.5px;top:270.26px;font-size:8px;line-height:8.94px;color:#141414;font-weight:bold;transform:scaleX(1.028);">Więcej</div>
<div class="t" id="t55" style="left:9.73px;top:292.31px;font-size:9.4px;line-height:10.50px;color:#303030;">[-]</div>
<div class="t" id="t56" style="left:26.19px;top:292.31px;font-size:9.4px;line-height:10.50px;color:#303030;">1</div>
<div class="t" id="t57" style="left:38.39px;top:292.31px;font-size:9.4px;line-height:10.50px;color:#303030;">2</div>
<div class="t" id="t58" style="left:52.39px;top:292.31px;font-size:9.4px;line-height:10.50px;color:#303030;">3</div>
<div class="t" id="t59" style="left:66.39px;top:292.31px;font-size:9.4px;line-height:10.50px;color:#303030;">4</div>
<div class="t" id="t60" style="left:80.39px;top:292.31px;font-size:9.4px;line-height:10.50px;color:#303030;">5</div>
<div class="t" id="t61" style="left:94.39px;top:292.31px;font-size:9.4px;line-height:10.50px;color:#303030;">6</div>
<div class="t" id="t62" style="left:107.89px;top:292.31px;font-size:9.4px;line-height:10.50px;color:#303030;">7</div>
<div class="t" id="t63" style="left:121.39px;top:292.31px;font-size:9.4px;line-height:10.50px;color:#303030;">8</div>
<div class="t" id="t64" style="left:135.39px;top:292.31px;font-size:9.4px;line-height:10.50px;color:#303030;">9</div>
<div class="t" id="t65" style="left:149.89px;top:292.31px;font-size:9.4px;line-height:10.50px;color:#303030;">0</div>
<div class="t" id="t66" style="left:164.09px;top:292.31px;font-size:9.4px;line-height:10.50px;color:#303030;">a</div>
<div class="t" id="t67" style="left:177.39px;top:292.31px;font-size:9.4px;line-height:10.50px;color:#303030;">b</div>
<div class="t" id="t68" style="left:191.86px;top:292.31px;font-size:9.4px;line-height:10.50px;color:#303030;">c</div>
<div class="t" id="t69" style="left:205.39px;top:292.31px;font-size:9.4px;line-height:10.50px;color:#303030;">d</div>
<div class="t" id="t70" style="left:219.39px;top:292.31px;font-size:9.4px;line-height:10.50px;color:#303030;">e</div>
<div class="t" id="t71" style="left:233.7px;top:292.31px;font-size:9.4px;line-height:10.50px;color:#303030;">f</div>
<div class="t" id="t72" style="left:245.69px;top:292.31px;font-size:9.4px;line-height:10.50px;color:#303030;">g</div>
<div class="t" id="t73" style="left:258.69px;top:292.31px;font-size:9.4px;line-height:10.50px;color:#303030;">h</div>
<div class="t" id="t74" style="left:272.75px;top:292.31px;font-size:9.4px;line-height:10.50px;color:#303030;">i</div>
<div class="t" id="t75" style="left:283.95px;top:292.31px;font-size:9.4px;line-height:10.50px;color:#303030;">j</div>
<div class="t" id="t76" style="left:294.66px;top:292.31px;font-size:9.4px;line-height:10.50px;color:#303030;">k</div>
<div class="t" id="t77" style="left:308.15px;top:292.31px;font-size:9.4px;line-height:10.50px;color:#303030;">l</div>
<div class="t" id="t78" style="left:319.09px;top:292.31px;font-size:9.4px;line-height:10.50px;color:#303030;">m</div>
<div class="t" id="t79" style="left:335.69px;top:292.31px;font-size:9.4px;line-height:10.50px;color:#303030;">n</div>
<div class="t" id="t80" style="left:349.19px;top:292.31px;font-size:9.4px;line-height:10.50px;color:#303030;">o</div>
<div class="t" id="t81" style="left:363.09px;top:292.31px;font-size:9.4px;line-height:10.50px;color:#303030;">p</div>
<div class="t" id="t82" style="left:376.94px;top:292.31px;font-size:9.4px;line-height:10.50px;color:#303030;">r</div>
<div class="t" id="t83" style="left:388.91px;top:292.31px;font-size:9.4px;line-height:10.50px;color:#303030;">s</div>
<div class="t" id="t84" style="left:403.0px;top:292.31px;font-size:9.4px;line-height:10.50px;color:#303030;">t</div>
<div class="t" id="t85" style="left:414.89px;top:292.31px;font-size:9.4px;line-height:10.50px;color:#303030;">u</div>
<div class="t" id="t86" style="left:428.66px;top:292.31px;font-size:9.4px;line-height:10.50px;color:#303030;">v</div>
<div class="t" id="t87" style="left:441.86px;top:292.31px;font-size:9.4px;line-height:10.50px;color:#303030;">w</div>
<div class="t" id="t88" style="left:457.46px;top:292.31px;font-size:9.4px;line-height:10.50px;color:#303030;">x</div>
<div class="t" id="t89" style="left:470.66px;top:292.31px;font-size:9.4px;line-height:10.50px;color:#303030;">y</div>
<div class="t" id="t90" style="left:483.41px;top:292.31px;font-size:9.4px;line-height:10.50px;color:#303030;">z</div>
<div class="t" id="t91" style="left:1088px;top:313.31px;font-size:8.8px;line-height:9.83px;color:#262626;font-weight:bold;transform:scaleX(0.917);">5</div>
<div class="t" id="t92" style="left:1101px;top:313.31px;font-size:8.8px;line-height:9.83px;color:#262626;font-weight:bold;transform:scaleX(0.766);">10</div>
<div class="t" id="t93" style="left:1117px;top:313.31px;font-size:8.8px;line-height:9.83px;color:#262626;font-weight:bold;transform:scaleX(0.919);">50</div>
<div class="t" id="t94" style="left:1155.6px;top:313.31px;font-size:8.8px;line-height:9.83px;color:#262626;font-weight:bold;transform:scaleX(0.912);">200</div>
<div class="t" id="t95" style="left:1178px;top:313.31px;font-size:8.8px;line-height:9.83px;color:#262626;font-weight:bold;transform:scaleX(0.885);">500</div>
<div class="t" id="t96" style="left:1135px;top:313.31px;font-size:8.8px;line-height:9.83px;color:#98c0c5;font-weight:bold;transform:scaleX(0.749);">100</div>
<div class="t" id="t97" style="left:38.0px;top:335.50px;font-size:8.2px;line-height:9.16px;color:#e2e2e2;transform:scaleX(0.895);">Lp.</div>
<div class="t" id="t98" style="left:62.5px;top:335.50px;font-size:8.2px;line-height:9.16px;color:#e2e2e2;transform:scaleX(0.948);">Nazwa produktu lub usługi</div>
<div class="t" id="t99" style="left:199.35px;top:335.50px;font-size:8.2px;line-height:9.16px;color:#e2e2e2;transform:scaleX(0.927);">Kategoria</div>
<div class="t" id="t100" style="left:295.1px;top:335.50px;font-size:8.2px;line-height:9.16px;color:#e2e2e2;transform:scaleX(0.924);">Magazyn</div>
<div class="t" id="t101" style="left:378.95px;top:335.50px;font-size:8.2px;line-height:9.16px;color:#e2e2e2;transform:scaleX(0.949);">Ilość na magazynie</div>
<div class="t" id="t102" style="left:514.4px;top:335.50px;font-size:8.2px;line-height:9.16px;color:#e2e2e2;">Status</div>
<div class="t" id="t103" style="left:618.5px;top:335.50px;font-size:8.2px;line-height:9.16px;color:#e2e2e2;transform:scaleX(0.964);">Producent</div>
<div class="t" id="t104" style="left:733.5px;top:335.50px;font-size:8.2px;line-height:9.16px;color:#e2e2e2;transform:scaleX(0.951);">Jednostka miary</div>
<div class="t" id="t105" style="left:845.6px;top:330.30px;font-size:8.2px;line-height:9.16px;color:#e2e2e2;transform:scaleX(0.894);">Cena</div>
<div class="t" id="t106" style="left:844.85px;top:341.00px;font-size:8.2px;line-height:9.16px;color:#e2e2e2;transform:scaleX(1.043);">netto</div>
<div class="t" id="t107" style="left:887.0px;top:335.50px;font-size:8.2px;line-height:9.16px;color:#e2e2e2;transform:scaleX(0.923);">Marża</div>
<div class="t" id="t108" style="left:937.6px;top:330.30px;font-size:8.2px;line-height:9.16px;color:#e2e2e2;transform:scaleX(0.899);">Kod</div>
<div class="t" id="t109" style="left:928.6px;top:341.00px;font-size:8.2px;line-height:9.16px;color:#e2e2e2;transform:scaleX(0.976);">produktu</div>
<div class="t" id="t110" style="left:1015.9px;top:335.50px;font-size:8.2px;line-height:9.16px;color:#e2e2e2;transform:scaleX(0.938);">Numer ean</div>
<div class="t" id="t111" style="left:1113.05px;top:335.50px;font-size:8.2px;line-height:9.16px;color:#e2e2e2;transform:scaleX(0.974);">Dostawy</div>
<div class="t" id="t112" style="left:1167.1px;top:335.50px;font-size:8.2px;line-height:9.16px;color:#e2e2e2;transform:scaleX(0.941);">Usuń</div>
<div class="t" id="t113" style="left:38px;top:361.20px;font-size:8.3px;line-height:9.27px;color:#505050;">1</div>
<div class="t" id="t114" style="left:64px;top:361.20px;font-size:8.3px;line-height:9.27px;color:#161616;font-weight:bold;transform:scaleX(0.937);">zt2</div>
<div class="t" id="t115" style="left:178.8px;top:361.22px;font-size:9.7px;line-height:10.83px;color:#222;transform:scaleX(0.933);">Kategoria główn</div>
<div class="t" id="t116" style="left:277.4px;top:361.20px;font-size:8.3px;line-height:9.27px;color:#2b2b2b;transform:scaleX(0.860);">Magazyn 1</div>
<div class="t" id="t117" style="left:595.8px;top:359.70px;font-size:10.3px;line-height:11.51px;color:#222;transform:scaleX(0.871);">wybierz</div>
<div class="t" id="t118" style="left:364.8px;top:361.81px;font-size:8.8px;line-height:9.83px;color:#1a1a1a;transform:scaleX(1.019);-webkit-text-stroke:0.2px #1a1a1a;">0</div>
<div class="t" id="t119" style="left:712px;top:360.20px;font-size:10.3px;line-height:11.51px;color:#222;transform:scaleX(0.873);">sztuka</div>
<div class="t" id="t120" style="left:836px;top:361.20px;font-size:8.3px;line-height:9.27px;color:#333;">145</div>
<div class="t" id="t121" style="left:887px;top:361.20px;font-size:8.3px;line-height:9.27px;color:#333;">33</div>
<div class="t" id="t122" style="left:38px;top:384.00px;font-size:8.3px;line-height:9.27px;color:#505050;">2</div>
<div class="t" id="t123" style="left:64px;top:384.00px;font-size:8.3px;line-height:9.27px;color:#161616;font-weight:bold;transform:scaleX(0.906);">asdfadfsadf</div>
<div class="t" id="t124" style="left:178.8px;top:384.00px;font-size:9.7px;line-height:10.83px;color:#222;transform:scaleX(0.933);">Kategoria główn</div>
<div class="t" id="t125" style="left:277.4px;top:384.00px;font-size:8.3px;line-height:9.27px;color:#2b2b2b;transform:scaleX(0.860);">Magazyn 1</div>
<div class="t" id="t126" style="left:595.8px;top:382.51px;font-size:10.3px;line-height:11.51px;color:#222;transform:scaleX(0.833);">Kaskada</div>
<div class="t" id="t127" style="left:364.8px;top:384.61px;font-size:8.8px;line-height:9.83px;color:#1a1a1a;transform:scaleX(1.019);-webkit-text-stroke:0.2px #1a1a1a;">0</div>
<div class="t" id="t128" style="left:712px;top:383.01px;font-size:10.3px;line-height:11.51px;color:#222;transform:scaleX(0.873);">sztuka</div>
<div class="t" id="t129" style="left:836px;top:384.00px;font-size:8.3px;line-height:9.27px;color:#333;">0</div>
<div class="t" id="t130" style="left:887px;top:384.00px;font-size:8.3px;line-height:9.27px;color:#333;">-11</div>
<div class="t" id="t131" style="left:1104px;top:378.50px;font-size:8.3px;line-height:9.27px;color:#333;">[object</div>
<div class="t" id="t132" style="left:1104px;top:388.50px;font-size:8.3px;line-height:9.27px;color:#333;">Object]</div>
<div class="t" id="t133" style="left:38px;top:406.86px;font-size:8.3px;line-height:9.27px;color:#505050;">3</div>
<div class="t" id="t134" style="left:64px;top:406.86px;font-size:8.3px;line-height:9.27px;color:#161616;font-weight:bold;transform:scaleX(0.906);">asdfadfsadf</div>
<div class="t" id="t135" style="left:178.8px;top:406.86px;font-size:9.7px;line-height:10.83px;color:#222;transform:scaleX(0.933);">Kategoria główn</div>
<div class="t" id="t136" style="left:277.4px;top:406.86px;font-size:8.3px;line-height:9.27px;color:#2b2b2b;transform:scaleX(0.930);">magazyn karola</div>
<div class="t" id="t137" style="left:595.8px;top:405.36px;font-size:10.3px;line-height:11.51px;color:#222;transform:scaleX(0.833);">Kaskada</div>
<div class="t" id="t138" style="left:364.8px;top:407.45px;font-size:8.8px;line-height:9.83px;color:#1a1a1a;transform:scaleX(1.019);-webkit-text-stroke:0.2px #1a1a1a;">0</div>
<div class="t" id="t139" style="left:712px;top:405.86px;font-size:10.3px;line-height:11.51px;color:#222;transform:scaleX(0.873);">sztuka</div>
<div class="t" id="t140" style="left:836px;top:406.86px;font-size:8.3px;line-height:9.27px;color:#333;">0</div>
<div class="t" id="t141" style="left:887px;top:406.86px;font-size:8.3px;line-height:9.27px;color:#333;">-11</div>
<div class="t" id="t142" style="left:1104px;top:401.36px;font-size:8.3px;line-height:9.27px;color:#333;">[object</div>
<div class="t" id="t143" style="left:1104px;top:411.36px;font-size:8.3px;line-height:9.27px;color:#333;">Object]</div>
<div class="t" id="t144" style="left:38px;top:429.70px;font-size:8.3px;line-height:9.27px;color:#505050;">4</div>
<div class="t" id="t145" style="left:64px;top:429.70px;font-size:8.3px;line-height:9.27px;color:#161616;font-weight:bold;transform:scaleX(0.937);">zt3</div>
<div class="t" id="t146" style="left:178.8px;top:429.72px;font-size:9.7px;line-height:10.83px;color:#222;transform:scaleX(0.933);">Kategoria główn</div>
<div class="t" id="t147" style="left:277.4px;top:429.70px;font-size:8.3px;line-height:9.27px;color:#2b2b2b;transform:scaleX(0.930);">magazyn karola</div>
<div class="t" id="t148" style="left:595.8px;top:428.20px;font-size:10.3px;line-height:11.51px;color:#222;transform:scaleX(0.871);">wybierz</div>
<div class="t" id="t149" style="left:364.8px;top:430.31px;font-size:8.8px;line-height:9.83px;color:#1a1a1a;transform:scaleX(1.019);-webkit-text-stroke:0.2px #1a1a1a;">0</div>
<div class="t" id="t150" style="left:712px;top:428.70px;font-size:10.3px;line-height:11.51px;color:#222;transform:scaleX(0.873);">sztuka</div>
<div class="t" id="t151" style="left:836px;top:429.70px;font-size:8.3px;line-height:9.27px;color:#333;">99</div>
<div class="t" id="t152" style="left:887px;top:429.70px;font-size:8.3px;line-height:9.27px;color:#333;">17</div>
<div class="t" id="t153" style="left:38px;top:452.56px;font-size:8.3px;line-height:9.27px;color:#505050;">5</div>
<div class="t" id="t154" style="left:64px;top:452.56px;font-size:8.3px;line-height:9.27px;color:#161616;font-weight:bold;transform:scaleX(0.937);">zt2</div>
<div class="t" id="t155" style="left:178.8px;top:452.56px;font-size:9.7px;line-height:10.83px;color:#222;transform:scaleX(0.933);">Kategoria główn</div>
<div class="t" id="t156" style="left:277.4px;top:452.56px;font-size:8.3px;line-height:9.27px;color:#2b2b2b;transform:scaleX(0.930);">magazyn karola</div>
<div class="t" id="t157" style="left:595.8px;top:451.06px;font-size:10.3px;line-height:11.51px;color:#222;transform:scaleX(0.871);">wybierz</div>
<div class="t" id="t158" style="left:364.8px;top:453.15px;font-size:8.8px;line-height:9.83px;color:#1a1a1a;transform:scaleX(1.019);-webkit-text-stroke:0.2px #1a1a1a;">0</div>
<div class="t" id="t159" style="left:712px;top:451.56px;font-size:10.3px;line-height:11.51px;color:#222;transform:scaleX(0.873);">sztuka</div>
<div class="t" id="t160" style="left:836px;top:452.56px;font-size:8.3px;line-height:9.27px;color:#333;">145</div>
<div class="t" id="t161" style="left:887px;top:452.56px;font-size:8.3px;line-height:9.27px;color:#333;">33</div>
<div class="t" id="t162" style="left:38px;top:475.41px;font-size:8.3px;line-height:9.27px;color:#505050;">6</div>
<div class="t" id="t163" style="left:64px;top:475.41px;font-size:8.3px;line-height:9.27px;color:#161616;font-weight:bold;transform:scaleX(0.937);">zt1</div>
<div class="t" id="t164" style="left:178.8px;top:475.41px;font-size:9.7px;line-height:10.83px;color:#222;transform:scaleX(0.933);">Kategoria główn</div>
<div class="t" id="t165" style="left:277.4px;top:475.41px;font-size:8.3px;line-height:9.27px;color:#2b2b2b;transform:scaleX(0.930);">magazyn karola</div>
<div class="t" id="t166" style="left:595.8px;top:473.90px;font-size:10.3px;line-height:11.51px;color:#222;transform:scaleX(0.871);">wybierz</div>
<div class="t" id="t167" style="left:364.8px;top:476.00px;font-size:8.8px;line-height:9.83px;color:#1a1a1a;transform:scaleX(1.019);-webkit-text-stroke:0.2px #1a1a1a;">0</div>
<div class="t" id="t168" style="left:712px;top:474.40px;font-size:10.3px;line-height:11.51px;color:#222;transform:scaleX(0.873);">sztuka</div>
<div class="t" id="t169" style="left:836px;top:475.41px;font-size:8.3px;line-height:9.27px;color:#333;">11</div>
<div class="t" id="t170" style="left:887px;top:475.41px;font-size:8.3px;line-height:9.27px;color:#333;">2</div>
<div class="t" id="t171" style="left:990.8px;top:9.50px;font-size:6.8px;line-height:7.60px;color:#5f4c26;transform:scaleX(0.889);">(985029)</div>
<div class="t" id="t172" style="left:971px;top:22.01px;font-size:7.6px;line-height:8.49px;color:#5f4c26;transform:scaleX(1.056);">Firma Przykład</div>
<div class="t" id="t173" style="left:1047px;top:22.01px;font-size:7.6px;line-height:8.49px;color:#5f4c26;transform:scaleX(1.066);">wyloguj</div>
<div class="t" id="t174" style="left:1116.8px;top:270.60px;font-size:8px;line-height:8.94px;color:#151c1e;font-weight:bold;transform:scaleX(0.919);z-index:5;-webkit-text-stroke:0.2px #151c1e;">Ustawienia kolumn</div>
<svg class="a" style="left:0;top:0" width="1200" height="478"><polygon points="542.5,262 821,262 821,248.7 1072,273.6 821,299 821,286 542.5,286" fill="#000"/></svg>
<div class="a" style="left:1074px;top:249px;width:123.2px;height:55px;border:8px solid #ff0000;background:#fff;overflow:hidden"><div style="position:absolute;left:7.5px;top:6.2px;width:110px;height:20.7px;background:#a9d6de;border:1px solid #8cbec6;border-radius:3px"></div><div style="position:absolute;left:27.5px;top:7.2px;width:1px;height:18.7px;background:#8cbec6"></div></div>
</body></html>
